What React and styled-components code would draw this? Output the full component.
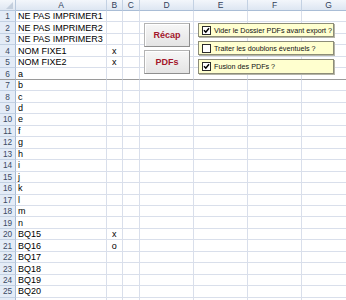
import React from "react";
import styled, { createGlobalStyle } from "styled-components";

const Global = createGlobalStyle`
  html, body { margin: 0; padding: 0; background: #fff; overflow: hidden; }
  body { font-family: "Liberation Sans", Arial, sans-serif; }
`;

const COLS = ["A", "B", "C", "D", "E", "F", "G"];
const WIDTHS = "16px 91px 15.5px 17.5px 54px 54px 54px 54px";

const Wrap = styled.div`
  position: relative;
  width: 346px;
  height: 300px;
  overflow: hidden;
`;

const Sheet = styled.div`
  display: grid;
  grid-template-columns: ${WIDTHS};
  grid-template-rows: 11px repeat(26, 11.48px);
  width: 356px;
`;

const Corner = styled.div`
  box-sizing: border-box;
  background: linear-gradient(#f4f7fb, #dfe7f2);
  border-right: 1px solid #b8c8dc;
  border-bottom: 1px solid #b8c8dc;
  position: relative;
  &::after {
    content: "";
    position: absolute;
    right: 2px;
    bottom: 1px;
    width: 0;
    height: 0;
    border-left: 7px solid transparent;
    border-bottom: 7px solid #c4cfdd;
  }
`;

const ColHead = styled.div`
  box-sizing: border-box;
  background: linear-gradient(#f3f6fb, #dde6f2);
  border-right: 1px solid #c3d1e3;
  border-bottom: 1px solid #a9bdd6;
  font-size: 8.5px;
  line-height: 10px;
  text-align: center;
  color: #31405a;
`;

const RowHead = styled.div`
  box-sizing: border-box;
  background: #e4ecf7;
  border-right: 1px solid #a9bdd6;
  border-bottom: 1px solid ${(p) => (p.$freeze ? "#9a9a9a" : "#c3d1e3")};
  font-size: 8.3px;
  display: flex;
  align-items: center;
  justify-content: center;
  color: #3b4a63;
`;

const Cell = styled.div`
  box-sizing: border-box;
  border-right: 1px solid #d9dfeb;
  border-bottom: 1px solid ${(p) => (p.$freeze ? "#9a9a9a" : "#d9dfeb")};
  font-size: 9px;
  color: #000;
  display: flex;
  align-items: center;
  justify-content: ${(p) => (p.$center ? "center" : "flex-start")};
  padding-left: ${(p) => (p.$center ? "0" : "2px")};
  white-space: nowrap;
  overflow: visible;
`;

const BtnStack = styled.div`
  position: absolute;
  left: 144px;
  top: 23px;
  display: flex;
  flex-direction: column;
  gap: 3px;
`;

const Button = styled.div`
  box-sizing: border-box;
  width: 46px;
  height: 24px;
  background: linear-gradient(#f7f7f7, #e4e4e4);
  border: 1px solid #b4b4b4;
  border-right-color: #8e8e8e;
  border-bottom-color: #8e8e8e;
  box-shadow: inset 1px 1px 0 #fff;
  color: #a3162b;
  font-weight: bold;
  font-size: 9px;
  display: flex;
  align-items: center;
  justify-content: center;
`;

const BoxStack = styled.div`
  position: absolute;
  left: 198px;
  top: 23px;
  display: flex;
  flex-direction: column;
  gap: 4px;
`;

const CheckPanel = styled.div`
  box-sizing: border-box;
  width: 136px;
  height: ${(p) => p.$h}px;
  background: #ffffcf;
  border: 1px solid #8d8d78;
  box-shadow: 1px 1px 0 #b5b5a8;
  display: flex;
  align-items: center;
  gap: 3px;
  padding-left: 3px;
  font-size: 7.2px;
  color: #111;
  white-space: nowrap;
`;

const Box = styled.div`
  box-sizing: border-box;
  flex: none;
  width: 9px;
  height: 9px;
  background: #fff;
  border: 1px solid #2a2a2a;
  display: flex;
  align-items: center;
  justify-content: center;
`;

const Check = () => (
  <svg width="7" height="7" viewBox="0 0 7 7">
    <path d="M1 3.2 L2.8 5.2 L6 1.2" fill="none" stroke="#000" strokeWidth="1.5" />
  </svg>
);

const colA = [
  "NE PAS IMPRIMER1",
  "NE PAS IMPRIMER2",
  "NE PAS IMPRIMER3",
  "NOM FIXE1",
  "NOM FIXE2",
  "a", "b", "c", "d", "e", "f", "g", "h", "i", "j", "k", "l", "m", "n",
  "BQ15", "BQ16", "BQ17", "BQ18", "BQ19", "BQ20", "",
];
const colB = { 4: "x", 5: "x", 20: "x", 21: "o" };

export default function App() {
  const rows = [];
  for (let r = 1; r <= 26; r++) {
    const fz = r === 6;
    rows.push(
      <RowHead key={`h${r}`} $freeze={fz}>{r <= 25 ? r : ""}</RowHead>,
      <Cell key={`a${r}`} $freeze={fz}>{colA[r - 1]}</Cell>,
      <Cell key={`b${r}`} $freeze={fz} $center>{colB[r] || ""}</Cell>,
      ...["C", "D", "E", "F", "G"].map((c) => <Cell key={`${c}${r}`} $freeze={fz} />)
    );
  }
  return (
    <Wrap>
      <Global />
      <Sheet>
        <Corner />
        {COLS.map((c) => (
          <ColHead key={c}>{c}</ColHead>
        ))}
        {rows}
      </Sheet>
      <BtnStack>
        <Button>Récap</Button>
        <Button>PDFs</Button>
      </BtnStack>
      <BoxStack>
        <CheckPanel $h={14}>
          <Box><Check /></Box>
          <span>Vider le Dossier PDFs avant export ?</span>
        </CheckPanel>
        <CheckPanel $h={14}>
          <Box />
          <span>Traiter les doublons éventuels ?</span>
        </CheckPanel>
        <CheckPanel $h={15}>
          <Box><Check /></Box>
          <span>Fusion des PDFs ?</span>
        </CheckPanel>
      </BoxStack>
    </Wrap>
  );
}
